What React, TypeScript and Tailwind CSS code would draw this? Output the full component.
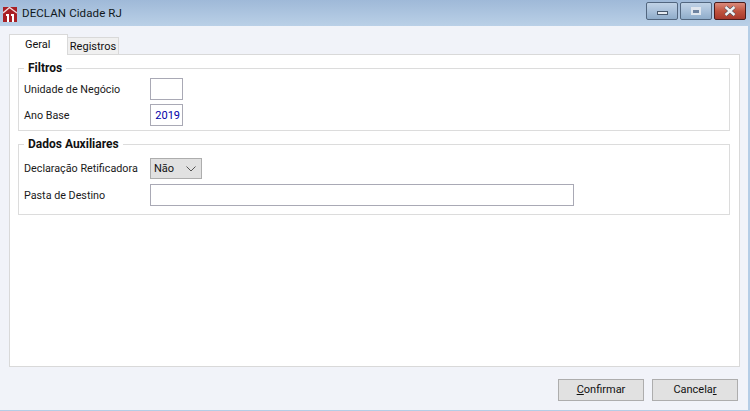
import React from 'react';

const font = { fontFamily: 'Roboto, "Liberation Sans", Arial, sans-serif' };

function AppIcon() {
  return (
    <svg width="14" height="15" viewBox="0 0 14 15" className="shrink-0">
      <rect x="0" y="0" width="14" height="15" fill="#a81f24" />
      <path d="M0 6 L6.5 0.5 L14 6" stroke="#f2d9d9" strokeWidth="1.4" fill="none" />
      <rect x="4" y="7" width="2" height="8" fill="#fff" />
      <rect x="9" y="7" width="2" height="8" fill="#fff" />
      <rect x="3" y="7" width="1" height="2" fill="#fff" />
      <rect x="8" y="7" width="1" height="2" fill="#fff" />
    </svg>
  );
}

function TitleBar() {
  return (
    <div className="h-[26px] shrink-0 flex items-center pl-[3px] pr-[4px] bg-gradient-to-b from-[#9fb9d8] to-[#bad0e7]">
      <div className="mt-[3px]"><AppIcon /></div>
      <span className="ml-[5px] mt-[1px] text-[11.5px] tracking-[0.1px] text-[#101820] leading-none">DECLAN Cidade RJ</span>
      <div className="ml-auto flex gap-[2px] -mt-[4px]">
        <button className="w-[32px] h-[18px] rounded-[2px] border border-[#52667f] bg-gradient-to-b from-[#c0d2e6] via-[#a9c0da] to-[#8facca] flex items-center justify-center">
          <span className="block w-[11px] h-[4px] mt-[3px] bg-[#e6ebf1] border border-[#46566a]" />
        </button>
        <button className="w-[32px] h-[18px] rounded-[2px] border border-[#52667f] bg-gradient-to-b from-[#c0d2e6] via-[#a9c0da] to-[#8facca] flex items-center justify-center">
          <span className="block w-[10px] h-[8px] bg-[#6f83a0] border-2 border-t-[3px] border-[#e0e6ee]" />
        </button>
        <button className="w-[32px] h-[18px] rounded-[2px] border border-[#4a1c1c] bg-gradient-to-b from-[#d98a7c] via-[#c0533f] to-[#a8382c] flex items-center justify-center">
          <svg width="12" height="10" viewBox="0 0 12 10">
            <path d="M1.5 1 L10.5 9 M10.5 1 L1.5 9" stroke="#3c4a5c" strokeWidth="3.6" />
            <path d="M1.5 1 L10.5 9 M10.5 1 L1.5 9" stroke="#f1f2f4" strokeWidth="2.4" />
          </svg>
        </button>
      </div>
    </div>
  );
}

function Tabs() {
  return (
    <div className="flex items-end h-[20px] relative z-10 text-[11px]">
      <div className="w-[59px] h-[21px] -mb-px bg-white border border-b-0 border-[#d9d9d9] text-[#111] pl-[15px] pt-[2px]">Geral</div>
      <div className="w-[52px] h-[17px] -ml-px bg-[#f0f0f0] border border-b-0 border-[#d9d9d9] text-[#111] text-center leading-[18px]">Registros</div>
    </div>
  );
}

function Group({ title, className, children }: { title: string; className: string; children: React.ReactNode }) {
  return (
    <fieldset className={`border border-[#dcdcdc] ml-[8px] mr-[9px] pl-[5px] ${className}`}>
      <legend className="px-[4px] text-[12px] font-bold text-[#111] leading-[14px]">{title}</legend>
      {children}
    </fieldset>
  );
}

function Row({ label, className, children }: { label: string; className: string; children: React.ReactNode }) {
  return (
    <div className={`flex items-center ${className}`}>
      <span className="w-[126px] shrink-0 pt-[2px] text-[10.75px] text-[#1a1a1a] leading-none">{label}</span>
      {children}
    </div>
  );
}

export default function App() {
  return (
    <div style={font} className="w-[750px] h-[411px] flex flex-col overflow-hidden bg-[#b5cde6]">
      <TitleBar />
      <div className="flex-1 mr-[2px] mb-px bg-[#f1f3f9] flex flex-col px-[9px] pt-[8px] min-h-0">
        <Tabs />
        <div className="w-[731px] h-[313px] bg-white border border-[#d9d9d9] pt-[6px] shrink-0">
          <Group title="Filtros" className="h-[70px]">
            <Row label="Unidade de Negócio" className="mt-[3px]">
              <div className="w-[33px] h-[22px] border border-[#a9a9b5] bg-white" />
            </Row>
            <Row label="Ano Base" className="mt-[4px]">
              <div className="w-[33px] h-[22px] border border-[#a9a9b5] bg-white text-[11px] text-[#0000a8] text-right pr-[2px] leading-[22px]">2019</div>
            </Row>
          </Group>
          <Group title="Dados Auxiliares" className="h-[78px] mt-[6px]">
            <Row label="Declaração Retificadora" className="mt-[7px]">
              <div className="w-[52px] h-[21px] border border-[#adadad] bg-[#e1e1e1] text-[11px] text-[#111] flex items-center pl-[3px] pr-[5px] justify-between">
                <span className="mt-[2px]">Não</span>
                <svg width="10" height="6" viewBox="0 0 10 6">
                  <path d="M0.5 0.5 L5 5 L9.5 0.5" stroke="#555" fill="none" />
                </svg>
              </div>
            </Row>
            <Row label="Pasta de Destino" className="mt-[5px]">
              <div className="w-[424px] h-[22px] border border-[#a9a9b5] bg-white" />
            </Row>
          </Group>
        </div>
        <div className="flex justify-end gap-[8px] mt-[12px] pr-[1px] text-[11px] text-[#111]">
          <button className="w-[86px] h-[22px] border border-[#adadad] bg-[#e1e1e1]"><span className="underline">C</span>onfirmar</button>
          <button className="w-[86px] h-[22px] border border-[#adadad] bg-[#e1e1e1]">Cancela<span className="underline">r</span></button>
        </div>
      </div>
    </div>
  );
}
